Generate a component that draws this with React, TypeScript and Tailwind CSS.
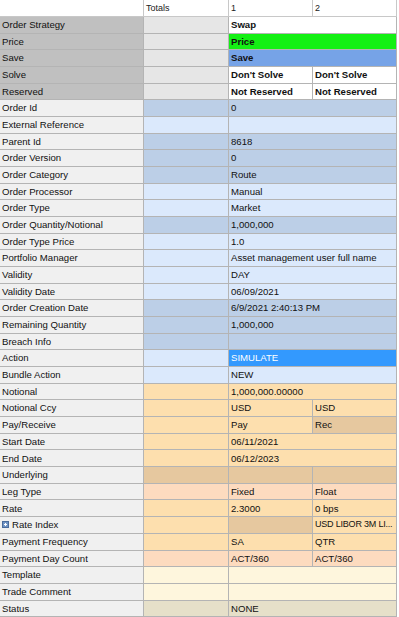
import React from "react";

type Cell = { text?: string; bg: string; bold?: boolean; light?: boolean; tight?: boolean };

interface Row {
  label: string;
  labelBg: string;
  totalsBg: string;
  span?: Cell;
  cells?: [Cell, Cell];
  expander?: boolean;
}

const GRAY = "bg-[#c0c0c0]";
const GRAY_T = "bg-[#e6e6e6]";
const LBL = "bg-[#f0f0f0]";
const DARK = "bg-[#bccfe7]";
const LIGHT = "bg-[#dbe9fc]";
const ORANGE = "bg-[#fddfae]";
const TAN = "bg-[#e6c89f]";
const PINK = "bg-[#fddbbf]";
const CREAM = "bg-[#fef6dd]";
const STATUS = "bg-[#e6e0c9]";
const WHITE = "bg-white";

const blue = (label: string, dark: boolean, text = ""): Row => ({
  label,
  labelBg: LBL,
  totalsBg: dark ? DARK : LIGHT,
  span: { text, bg: dark ? DARK : LIGHT },
});

const rows: Row[] = [
  { label: "Order Strategy", labelBg: GRAY, totalsBg: GRAY_T, span: { text: "Swap", bg: WHITE, bold: true } },
  { label: "Price", labelBg: GRAY, totalsBg: GRAY_T, span: { text: "Price", bg: "bg-[#14f014]", bold: true } },
  { label: "Save", labelBg: GRAY, totalsBg: GRAY_T, span: { text: "Save", bg: "bg-[#76a3e7]", bold: true } },
  {
    label: "Solve",
    labelBg: GRAY,
    totalsBg: GRAY_T,
    cells: [
      { text: "Don't Solve", bg: WHITE, bold: true },
      { text: "Don't Solve", bg: WHITE, bold: true },
    ],
  },
  {
    label: "Reserved",
    labelBg: GRAY,
    totalsBg: GRAY_T,
    cells: [
      { text: "Not Reserved", bg: WHITE, bold: true },
      { text: "Not Reserved", bg: WHITE, bold: true },
    ],
  },
  blue("Order Id", true, "0"),
  blue("External Reference", false),
  blue("Parent Id", true, "8618"),
  blue("Order Version", true, "0"),
  blue("Order Category", true, "Route"),
  blue("Order Processor", false, "Manual"),
  blue("Order Type", false, "Market"),
  blue("Order Quantity/Notional", true, "1,000,000"),
  blue("Order Type Price", false, "1.0"),
  blue("Portfolio Manager", false, "Asset management user full name"),
  blue("Validity", false, "DAY"),
  blue("Validity Date", false, "06/09/2021"),
  blue("Order Creation Date", true, "6/9/2021 2:40:13 PM"),
  blue("Remaining Quantity", true, "1,000,000"),
  blue("Breach Info", true),
  { label: "Action", labelBg: LBL, totalsBg: LIGHT, span: { text: "SIMULATE", bg: "bg-[#3399fe]", light: true } },
  blue("Bundle Action", false, "NEW"),
  { label: "Notional", labelBg: LBL, totalsBg: ORANGE, span: { text: "1,000,000.00000", bg: ORANGE } },
  {
    label: "Notional Ccy",
    labelBg: LBL,
    totalsBg: ORANGE,
    cells: [
      { text: "USD", bg: ORANGE },
      { text: "USD", bg: ORANGE },
    ],
  },
  {
    label: "Pay/Receive",
    labelBg: LBL,
    totalsBg: ORANGE,
    cells: [
      { text: "Pay", bg: ORANGE },
      { text: "Rec", bg: TAN },
    ],
  },
  { label: "Start Date", labelBg: LBL, totalsBg: ORANGE, span: { text: "06/11/2021", bg: ORANGE } },
  { label: "End Date", labelBg: LBL, totalsBg: ORANGE, span: { text: "06/12/2023", bg: ORANGE } },
  { label: "Underlying", labelBg: LBL, totalsBg: TAN, cells: [{ bg: TAN }, { bg: TAN }] },
  {
    label: "Leg Type",
    labelBg: LBL,
    totalsBg: PINK,
    cells: [
      { text: "Fixed", bg: PINK },
      { text: "Float", bg: PINK },
    ],
  },
  {
    label: "Rate",
    labelBg: LBL,
    totalsBg: ORANGE,
    cells: [
      { text: "2.3000", bg: ORANGE },
      { text: "0 bps", bg: ORANGE },
    ],
  },
  {
    label: "Rate Index",
    labelBg: LBL,
    totalsBg: ORANGE,
    expander: true,
    cells: [{ bg: TAN }, { text: "USD LIBOR 3M LI...", bg: ORANGE, tight: true }],
  },
  {
    label: "Payment Frequency",
    labelBg: LBL,
    totalsBg: ORANGE,
    cells: [
      { text: "SA", bg: ORANGE },
      { text: "QTR", bg: ORANGE },
    ],
  },
  {
    label: "Payment Day Count",
    labelBg: LBL,
    totalsBg: PINK,
    cells: [
      { text: "ACT/360", bg: PINK },
      { text: "ACT/360", bg: PINK },
    ],
  },
  { label: "Template", labelBg: LBL, totalsBg: CREAM, span: { text: "", bg: CREAM } },
  { label: "Trade Comment", labelBg: LBL, totalsBg: CREAM, span: { text: "", bg: CREAM } },
  { label: "Status", labelBg: LBL, totalsBg: STATUS, span: { text: "NONE", bg: STATUS } },
];

function ValueCell({ cell, wide }: { cell: Cell; wide?: boolean }) {
  return (
    <div
      className={`${cell.bg} ${wide ? "col-span-2" : ""} flex items-center overflow-hidden whitespace-nowrap border-r border-b border-[#b4b4b4] pl-[2px] ${
        cell.bold ? "font-bold" : ""
      } ${cell.light ? "text-white" : "text-[#111]"} ${cell.tight ? "text-[9px] tracking-[-0.2px]" : ""}`}
    >
      {cell.text}
    </div>
  );
}

export default function App() {
  return (
    <div
      className="flex h-[617px] w-[399px] flex-col bg-white text-[9.6px] leading-none"
      style={{ fontFamily: '"Liberation Sans", Arial, sans-serif' }}
    >
      {/* Header */}
      <div className="grid h-[17px] shrink-0 grid-cols-[144px_85px_84px_84px] text-[9px] text-[#222]">
        <div className="border-r border-b border-[#c8c8c8]" />
        <div className="flex items-center border-r border-b border-[#c8c8c8] pl-[2px]">Totals</div>
        <div className="flex items-center border-r border-b border-[#c8c8c8] pl-[2px]">1</div>
        <div className="flex items-center border-r border-b border-[#c8c8c8] pl-[2px]">2</div>
      </div>

      {/* Property rows */}
      {rows.map((row) => (
        <div key={row.label} className="grid min-h-0 flex-1 grid-cols-[144px_85px_84px_84px]">
          <div
            className={`${row.labelBg} flex items-center gap-[3px] border-r border-b border-[#b4b4b4] pl-[2px] text-[#111]`}
          >
            {row.expander && (
              <span className="relative inline-block h-[7px] w-[7px] border border-[#4a6c9c] bg-[#6f93c4]">
                <span className="absolute top-[2px] left-[1px] h-px w-[3px] bg-white" />
                <span className="absolute top-[1px] left-[2px] h-[3px] w-px bg-white" />
              </span>
            )}
            {row.label}
          </div>
          <div className={`${row.totalsBg} border-r border-b border-[#b4b4b4]`} />
          {row.span && <ValueCell cell={row.span} wide />}
          {row.cells && (
            <>
              <ValueCell cell={row.cells[0]} />
              <ValueCell cell={row.cells[1]} />
            </>
          )}
        </div>
      ))}
    </div>
  );
}
